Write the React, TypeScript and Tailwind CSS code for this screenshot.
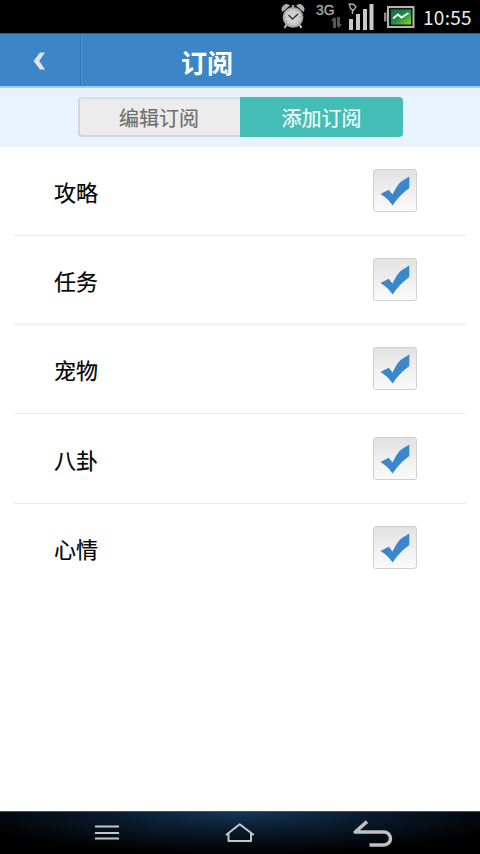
import { useState } from 'react';
import clsx from 'clsx';

const channels = [
  { name: '攻略', row: 'h-[89px] pt-[22px] border-b border-[#e6e6e6]' },
  { name: '任务', row: 'h-[90px] pt-[22px] border-b-[3px] border-[#f3f3f3]' },
  { name: '宠物', row: 'h-[88px] pt-[21px] border-b border-[#e9e9e9]' },
  { name: '八卦', row: 'h-[90px] pt-[23px] border-b border-[#e6e6e6]' },
  { name: '心情', row: 'h-[89px] pt-[22px]' },
];

function AlarmIcon() {
  return (
    <svg width="24" height="26" viewBox="0 0 24 26" fill="none">
      <path d="M6 20 L3.5 24 M18 20 L20.5 24" stroke="#c4c4c4" strokeWidth="2" />
      <path d="M1.5 8 A5 5 0 0 1 9 1.5 Z M22.5 8 A5 5 0 0 0 15 1.5 Z" fill="#b0b0b0" />
      <path d="M12 1 V4" stroke="#999" strokeWidth="2.5" />
      <circle cx="12" cy="13.3" r="9.4" fill="#cfcfcf" stroke="#a4a4a4" strokeWidth="2" />
      <circle cx="12" cy="13.3" r="6.9" stroke="#888" strokeWidth="1" strokeDasharray="1 2.5" />
      <path d="M7.5 11 L11.5 15 L17 10" stroke="#333" strokeWidth="1.4" />
    </svg>
  );
}

function SignalIcon() {
  return (
    <svg width="26" height="27" viewBox="0 0 26 27" fill="none">
      <path d="M1.2 1.2 H5.5 L8 3.8 L5.5 7.2 L2.8 6 Z M4.5 6.5 V11" stroke="#ababab" strokeWidth="1.4" />
      <path d="M1 16 H5 V27 H1 Z M8 11 H12 V27 H8 Z" fill="#c9c9c9" />
      <path d="M15 6 H19 V27 H15 Z M21.5 1 H25.5 V27 H21.5 Z" fill="#c9c9c9" />
    </svg>
  );
}

function BatteryIcon() {
  return (
    <svg width="31" height="22" viewBox="0 0 31 22" fill="none">
      <defs>
        <linearGradient id="charge" x1="0" y1="0" x2="1" y2="1">
          <stop offset="0" stopColor="#08704a" />
          <stop offset="0.5" stopColor="#1c8c44" />
          <stop offset="1" stopColor="#8bd32d" />
        </linearGradient>
      </defs>
      <path d="M0 6.5 H2.5 V15.5 H0 Z" fill="#888" />
      <rect x="4" y="1" width="25.5" height="20" fill="#161616" stroke="#b5b5b5" strokeWidth="2" />
      <rect x="7" y="3.5" width="20" height="15" fill="url(#charge)" />
      <path d="M9 12.5 L14 8.5 L17.5 11.5 L24.5 7" stroke="#f0fff0" strokeWidth="2" />
    </svg>
  );
}

function StatusBar() {
  return (
    <div className="flex h-[33px] items-start bg-black pl-[281px]">
      <div className="mt-1">
        <AlarmIcon />
      </div>
      <div className="ml-[11px] w-[26px] pt-[3px] font-['Liberation_Sans',sans-serif] text-[14px] leading-[14px] text-[#aaa] [-webkit-text-stroke:0.3px_#aaa]">
        3G
        <svg className="ml-[15px]" width="11" height="11" viewBox="0 0 11 11">
          <path d="M2 11 V4 H0 L3 0 L5 2 V11 Z M6 0 H9 V7 H11 L8 11 L6 9 Z" fill="#555" />
        </svg>
      </div>
      <div className="ml-1.5 mt-[3px]">
        <SignalIcon />
      </div>
      <div className="ml-2.5 mt-1.5">
        <BatteryIcon />
      </div>
      <span className="ml-2 mt-[5px] whitespace-nowrap text-[19px] leading-[24px] tracking-[0.3px] text-[#ececec]">
        10:55
      </span>
    </div>
  );
}

function CheckBox({ checked, onToggle }: { checked: boolean; onToggle: () => void }) {
  return (
    <button
      type="button"
      onClick={onToggle}
      className="flex h-[43px] w-11 items-center justify-center rounded-[3px] border border-[#d0d0d0] bg-linear-to-b from-[#e2e2e2] to-[#fbfbfb]"
    >
      {checked && (
        <svg width="30" height="30" viewBox="0 0 30 30">
          <path d="M0.5 18 L8.7 13.8 L12.5 18.5 C15 14 17.5 8 22 5 L29.3 0.5 V12 C24.5 15.5 18.5 20.5 12.7 29.5 C9.2 24.5 5 20.5 0.5 18 Z" fill="#3a87cb" />
        </svg>
      )}
    </button>
  );
}

export default function App() {
  const [selected, setSelected] = useState(channels.map((c) => c.name));

  const toggle = (name: string) =>
    setSelected((prev) => (prev.includes(name) ? prev.filter((n) => n !== name) : [...prev, name]));

  return (
    <div className="flex h-[854px] w-[480px] flex-col overflow-hidden bg-white font-['Noto_Sans_CJK_SC',sans-serif]">
      <StatusBar />

      <header className="flex h-[55px] border-t border-b-2 border-t-[#245a94] border-b-[#a3cdf3] bg-[#3c86c8]">
        <button type="button" className="flex w-[81px] justify-center border-r border-[#2d76b4] pr-px pt-[18px]">
          <svg width="13" height="18" viewBox="0 0 13 18">
            <path d="M7 0.5 H12 L6.3 9 L12 17.5 H7 L0.5 9 Z" fill="#dfe4e8" />
          </svg>
        </button>
        <h1 className="border-l border-[#4b94d4] pl-[99px] pt-[9px] text-[26px] font-bold leading-[38px] text-white">
          订阅
        </h1>
      </header>

      <div className="flex h-[59px] bg-[#e8f3fe] pl-[78px] pt-[9px] text-[20px]">
        <button type="button" className="h-10 w-[162px] rounded-l-[4px] border-2 border-r-0 border-[#d0d6dc] border-t-[#dadfe2] bg-[#ececec] pr-[2px] leading-[37px] text-[#6e6e6e] [-webkit-text-stroke:0.2px_#6e6e6e]">
          编辑订阅
        </button>
        <button type="button" className="h-10 w-[163px] rounded-r-[4px] bg-[#43bdb5] leading-[39px] text-[#f2fffd] [-webkit-text-stroke:0.2px_#f2fffd]">
          添加订阅
        </button>
      </div>

      <main className="flex-1 pl-[14px] pr-[14px]">
        {channels.map(({ name, row }) => (
          <div key={name} className={clsx('flex items-start justify-between pl-10 pr-[49px]', row)}>
            <span className="text-[22px] leading-[45px] text-black [-webkit-text-stroke:0.2px_#000]">{name}</span>
            <CheckBox checked={selected.includes(name)} onToggle={() => toggle(name)} />
          </div>
        ))}
      </main>

      <nav className="flex h-[43px] items-start border-t border-[#37556d] bg-[radial-gradient(ellipse_60%_100%_at_50%_0%,#163556_0%,#0a1a2c_45%,#000_100%)] pl-[95px]">
        <svg className="mt-[13px]" width="24" height="15" viewBox="0 0 24 15">
          <path d="M0 1.5 H24 M0 8 H24 M0 13.5 H24" stroke="#c6c6c6" strokeWidth="2" />
        </svg>
        <svg className="ml-[106px] mt-[11px]" width="30" height="20" viewBox="0 0 30 20" fill="none">
          <path d="M1 12 L14.7 1.3 L28.8 12 M3.5 10.5 V18 H26 V10.5" stroke="#c4c8cc" strokeWidth="2" strokeLinejoin="round" />
        </svg>
        <svg className="ml-[98px] mt-2" width="40" height="28" viewBox="0 0 40 28" fill="none">
          <path d="M14 1.6 L2.2 12 H31 A6.5 6.5 0 0 1 31 25 H16.5" stroke="#bfc0c4" strokeWidth="3.5" strokeLinejoin="round" />
        </svg>
      </nav>
    </div>
  );
}
